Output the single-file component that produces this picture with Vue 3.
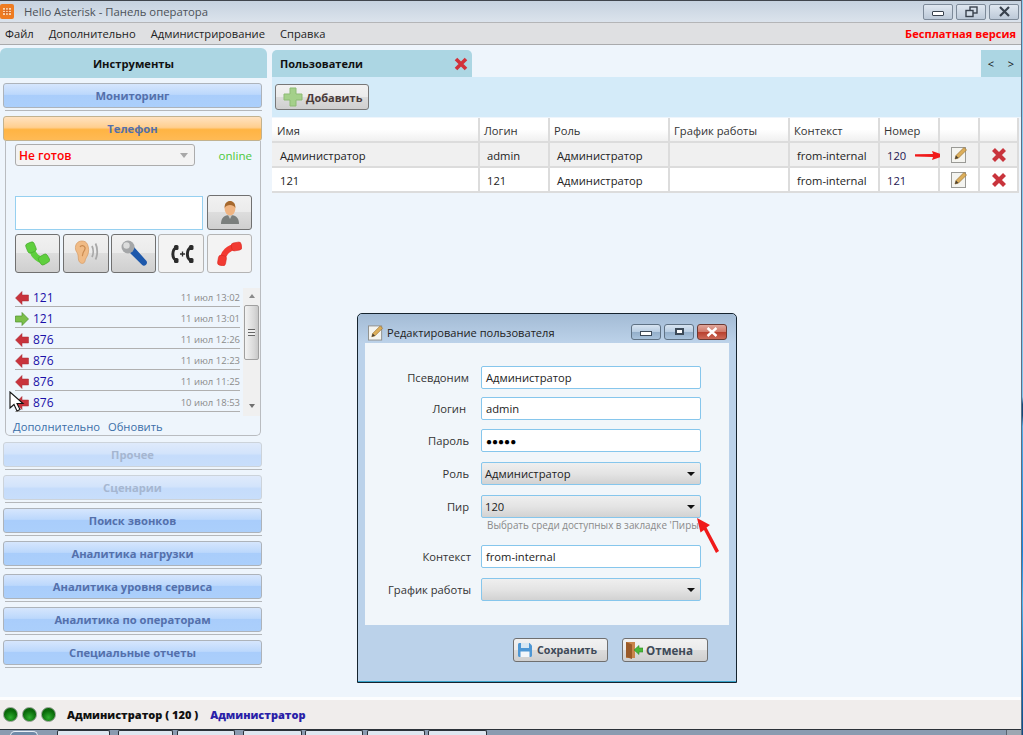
<script setup>
const menu = ['Файл', 'Дополнительно', 'Администрирование', 'Справка']
const callLog = [
  { num: '121', time: '11 июл 13:02', dir: 'in' },
  { num: '121', time: '11 июл 13:01', dir: 'out' },
  { num: '876', time: '11 июл 12:26', dir: 'in' },
  { num: '876', time: '11 июл 12:23', dir: 'in' },
  { num: '876', time: '11 июл 11:25', dir: 'in' },
  { num: '876', time: '10 июл 18:53', dir: 'in' },
]
const lowerTools = ['Поиск звонков', 'Аналитика нагрузки', 'Аналитика уровня сервиса', 'Аналитика по операторам', 'Специальные отчеты']
const users = [
  { name: 'Администратор', login: 'admin', role: 'Администратор', ctx: 'from-internal', num: '120' },
  { name: '121', login: '121', role: 'Администратор', ctx: 'from-internal', num: '121' },
]
const fields = [
  { label: 'Псевдоним', value: 'Администратор', kind: 'input' },
  { label: 'Логин', value: 'admin', kind: 'input' },
  { label: 'Пароль', value: '●●●●●', kind: 'pass' },
  { label: 'Роль', value: 'Администратор', kind: 'select' },
  { label: 'Пир', value: '120', kind: 'select', hint: "Выбрать среди доступных в закладке 'Пиры'" },
  { label: 'Контекст', value: 'from-internal', kind: 'input' },
  { label: 'График работы', value: '', kind: 'select' },
]
const tasks = [
  { w: 53, gap: 8 },
  { w: 55, gap: 4 },
  { w: 58, gap: 8 },
  { w: 59, gap: 3 },
  { w: 58, gap: 4 },
  { w: 58, gap: 3 },
  { w: 59, gap: 0 },
]
</script>

<template>
  <div class="screen">
    <div class="app">
      <header class="titlebar">
        <svg class="app-icon" width="14" height="15" viewBox="0 0 14 15">
          <rect width="14" height="15" rx="2" fill="#ee7c22" />
          <path d="M3 4h8v7H3z" fill="#fbd7b0" />
          <path d="M3 6.300h8M3 8.600h8M5.600 4v7M8.300 4v7" stroke="#d8641a" />
        </svg>
        <span class="title-text">Hello Asterisk - Панель оператора</span>
        <div class="win-btns">
          <span class="win-btn"><i class="ico-min"></i></span>
          <span class="win-btn">
            <svg width="13" height="12" viewBox="0 0 13 12" fill="none" stroke="#39424e" stroke-width="1.400"><rect x="5" y="1" width="7" height="6" /><rect x="1" y="4.500" width="7" height="6" fill="#d3dde8" /></svg>
          </span>
          <span class="win-btn">
            <svg width="13" height="11" viewBox="0 0 13 11" fill="none" stroke="#39424e" stroke-width="2.200"><path d="M2 1l9 9M11 1l-9 9" /></svg>
          </span>
        </div>
      </header>

      <nav class="menubar">
        <span v-for="m in menu" :key="m">{{ m }}</span>
        <b class="free">Бесплатная версия</b>
      </nav>

      <div class="workspace">
        <aside class="sidebar">
          <div class="side-head">Инструменты</div>
          <div class="tools">
            <button class="tool">Мониторинг</button>
            <hr class="tool-sep" />
            <button class="tool active">Телефон</button>

            <section class="phone">
              <div class="status-row">
                <div class="status-select">Не готов<i class="tri-gray"></i></div>
                <span class="online">online</span>
              </div>
              <div class="dial-row">
                <div class="dial-input"></div>
                <button class="ph-btn contact">
                  <svg width="20" height="25" viewBox="0 0 20 25">
                    <path d="M1 24c0-6 3-9 9-9s9 3 9 9z" fill="#7b7f7d" />
                    <path d="M8 15l2 4 2-4z" fill="#c9cbc9" />
                    <ellipse cx="10" cy="8.500" rx="5.400" ry="7" fill="#efb482" />
                    <path d="M4.600 8c0-5 2.400-7 5.400-7s5.400 2 5.400 7c-1.500-2.300-3-3-5.400-3S6 5.700 4.600 8z" fill="#a5682d" />
                  </svg>
                </button>
              </div>
              <div class="call-row">
                <button class="ph-btn">
                  <svg width="25" height="25" viewBox="0 0 25 25">
                    <path d="M7 5C6 12 12 19 20 20" fill="none" stroke="#5fcf3e" stroke-width="6" />
                    <rect x="1.500" y="1.500" width="9" height="10" rx="2.500" transform="rotate(-22 6 6.500)" fill="#5fcf3e" stroke="#46a52d" stroke-width=".6" />
                    <rect x="14" y="14" width="10" height="9" rx="2.500" transform="rotate(-30 19 18.500)" fill="#5fcf3e" stroke="#46a52d" stroke-width=".6" />
                  </svg>
                </button>
                <button class="ph-btn">
                  <svg width="26" height="27" viewBox="0 0 26 27">
                    <path d="M9 1C4 1 2 5 2.500 9c.3 2.500 2 3.500 2.500 6 .5 3 0 5 1.500 7s5 2 5.500-1c.4-2.500 2-4 3-7 .8-2.500 1-6-.5-9.500C13.500 2 11.500 1 9 1z" fill="#f0bb86" stroke="#d59a62" stroke-width=".7" />
                    <path d="M7 7c1-2 4-2 5 .5.5 1.500-.5 3-1.500 4.500-1 1.500-.5 3.500-1.500 4" fill="none" stroke="#c98a50" stroke-width="1.200" />
                    <path d="M19 6c1.500 3 1.500 8 0 11M22.500 3.500c2.300 4.500 2.300 11.500 0 16" fill="none" stroke="#a8a8a8" stroke-width="1.800" />
                  </svg>
                </button>
                <button class="ph-btn">
                  <svg width="28" height="27" viewBox="0 0 28 27">
                    <path d="M9 12l5-5 12.500 14c.8 1.200.6 2.800-.5 3.800s-2.800 1.200-3.800.2z" fill="#1d58ab" />
                    <circle cx="8" cy="7" r="6.500" fill="#a4a6a8" />
                    <circle cx="6.500" cy="5.500" r="3.200" fill="#dcdddd" />
                  </svg>
                </button>
                <button class="ph-btn flat">
                  <svg width="26" height="18" viewBox="0 0 26 18">
                    <path d="M9 2.500C3.500 3 3.500 15 9 15.500" fill="none" stroke="#2b2b2b" stroke-width="3" />
                    <rect x="6" y="0" width="4.500" height="5" rx="1.500" fill="#2b2b2b" />
                    <rect x="6" y="13" width="4.500" height="5" rx="1.500" fill="#2b2b2b" />
                    <path d="M12 9h5M14.500 6.500v5" stroke="#2b2b2b" stroke-width="1.300" />
                    <path d="M23.500 2.500C18 3 18 15 23.500 15.500" fill="none" stroke="#2b2b2b" stroke-width="3" />
                    <rect x="21" y="0" width="4.500" height="5" rx="1.500" fill="#2b2b2b" />
                    <rect x="21" y="13" width="4.500" height="5" rx="1.500" fill="#2b2b2b" />
                  </svg>
                </button>
                <button class="ph-btn flat">
                  <svg width="25" height="25" viewBox="0 0 25 25">
                    <path d="M19 6C12 6 6 12 5.500 19" fill="none" stroke="#f23a32" stroke-width="6" />
                    <rect x="14.500" y="1.500" width="10" height="8" rx="2.500" transform="rotate(-10 19.500 5.500)" fill="#f23a32" stroke="#d9271f" stroke-width=".6" />
                    <rect x="1" y="14.500" width="8" height="10" rx="2.500" transform="rotate(10 5 19.500)" fill="#f23a32" stroke="#d9271f" stroke-width=".6" />
                  </svg>
                </button>
              </div>

              <div class="log-wrap">
                <ul class="log">
                  <li v-for="(c, i) in callLog" :key="i">
                    <svg width="14" height="14" viewBox="0 0 14 14">
                      <path v-if="c.dir === 'in'" d="M7 .5L.5 7 7 13.500V10h6.500V4H7z" fill="#c8333c" stroke="#a62a30" stroke-width=".5" />
                      <path v-else d="M7 .5L13.500 7 7 13.500V10H.5V4H7z" fill="#7cc04a" stroke="#4f8f2c" stroke-width=".7" />
                    </svg>
                    <span class="log-num">{{ c.num }}</span>
                    <span class="log-time">{{ c.time }}</span>
                  </li>
                </ul>
                <div class="scroll">
                  <i class="tri-up"></i>
                  <div class="thumb"><span></span></div>
                  <i class="tri-down"></i>
                </div>
              </div>
              <div class="links"><a>Дополнительно</a><a>Обновить</a></div>
            </section>

            <button class="tool disabled">Прочее</button>
            <hr class="tool-sep" />
            <button class="tool disabled">Сценарии</button>
            <template v-for="t in lowerTools" :key="t">
              <hr class="tool-sep faint" />
              <button class="tool">{{ t }}</button>
            </template>
            <hr class="tool-sep" />
          </div>
        </aside>

        <main class="main">
          <div class="tabs">
            <div class="tab">
              <b>Пользователи</b>
              <svg width="14" height="14" viewBox="0 0 14 14"><path d="M2 2l10 10M12 2L2 12" stroke="#d2313a" stroke-width="3.600" /></svg>
            </div>
            <div class="tab-nav"><span>&lt;</span><span>&gt;</span></div>
          </div>
          <div class="toolbar">
            <button class="add-btn">
              <svg width="22" height="22" viewBox="0 0 22 22"><path d="M8 2h6v6h6v6h-6v6H8v-6H2V8h6z" fill="#a4d08a" stroke="#8dbb74" /></svg>
              Добавить
            </button>
          </div>
          <div class="grid">
            <div class="cell th">Имя</div>
            <div class="cell th">Логин</div>
            <div class="cell th">Роль</div>
            <div class="cell th">График работы</div>
            <div class="cell th">Контекст</div>
            <div class="cell th">Номер</div>
            <div class="cell th"></div>
            <div class="cell th"></div>
            <template v-for="(u, i) in users" :key="u.name">
              <div class="cell" :class="{ sel: i === 0 }">{{ u.name }}</div>
              <div class="cell" :class="{ sel: i === 0 }">{{ u.login }}</div>
              <div class="cell" :class="{ sel: i === 0 }">{{ u.role }}</div>
              <div class="cell" :class="{ sel: i === 0 }"></div>
              <div class="cell" :class="{ sel: i === 0 }">{{ u.ctx }}</div>
              <div class="cell num" :class="{ sel: i === 0 }">
                {{ u.num }}
                <svg v-if="i === 0" class="note-arrow" width="30" height="9" viewBox="0 0 30 9"><path d="M0 3.300L18 3l-1-3 13 4.500L17 9l1-3L0 5.500z" fill="#f01a1a" /></svg>
              </div>
              <div class="cell icon" :class="{ sel: i === 0 }">
                <svg width="17" height="17" viewBox="0 0 17 17">
                  <rect x=".5" y="1.500" width="14" height="15" fill="#f4f4f0" stroke="#9a9a96" />
                  <path d="M4 13l1-3.500L13 1.500l2.500 2.500-8 8z" fill="#dcae5a" stroke="#9b7230" stroke-width=".7" />
                  <path d="M4 13l1-3.500 2.500 2.500z" fill="#4b4032" />
                </svg>
              </div>
              <div class="cell icon" :class="{ sel: i === 0 }">
                <svg width="16" height="16" viewBox="0 0 16 16"><path d="M2.500 2.500l11 11M13.500 2.500l-11 11" stroke="#c9343c" stroke-width="4.200" /></svg>
              </div>
            </template>
          </div>
        </main>
      </div>

      <footer class="statusbar">
        <span class="led"></span><span class="led"></span><span class="led"></span>
        <b class="who">Администратор ( 120 )</b>
        <b class="who-role">Администратор</b>
      </footer>
      <div class="taskbar">
        <span class="start"></span>
        <span
          v-for="(t, i) in tasks"
          :key="i"
          class="task"
          :style="{ width: t.w + 'px', marginRight: t.gap + 'px' }"
        ></span>
        <span class="show-desktop"></span>
      </div>
    </div>

    <div class="dialog">
      <div class="dlg-title">
        <svg width="16" height="17" viewBox="0 0 17 17">
          <rect x=".5" y="1.500" width="14" height="15" fill="#f4f4f0" stroke="#8f8f8b" />
          <path d="M4 13l1-3.500L13 1.500l2.500 2.500-8 8z" fill="#dcae5a" stroke="#9b7230" stroke-width=".7" />
          <path d="M4 13l1-3.500 2.500 2.500z" fill="#4b4032" />
        </svg>
        <span>Редактирование пользователя</span>
        <div class="dlg-btns">
          <span class="dlg-btn"><i class="d-min"></i></span>
          <span class="dlg-btn"><i class="d-max"></i></span>
          <span class="dlg-btn close">
            <svg width="12" height="10" viewBox="0 0 12 10" fill="none" stroke="#fff" stroke-width="2.400"><path d="M1.500 1l9 8M10.500 1l-9 8" /></svg>
          </span>
        </div>
      </div>
      <div class="dlg-body">
        <div v-for="f in fields" :key="f.label" class="field">
          <label>{{ f.label }}</label>
          <div class="control" :class="f.kind">
            <span>{{ f.value }}</span>
            <i v-if="f.kind === 'select'" class="tri-black"></i>
          </div>
          <small v-if="f.hint">{{ f.hint }}</small>
        </div>
        <svg class="peer-arrow" width="30" height="38" viewBox="0 0 30 38"><path d="M2 0l13 7-3.500 2.500L24 33l-3 2L9 12l-3.500 2.500z" fill="#f01a1a" /></svg>
      </div>
      <div class="dlg-foot">
        <button class="dlg-action save">
          <svg width="16" height="16" viewBox="0 0 16 16">
            <path d="M1 2.500C1 1.700 1.700 1 2.500 1h10L15 3.500v10c0 .8-.7 1.500-1.500 1.500h-11c-.8 0-1.500-.7-1.500-1.500z" fill="#4e97d4" />
            <path d="M4 1h8v5H4z" fill="#d7e7f3" />
            <path d="M3.500 9.500h9V15h-9z" fill="#f4f7fa" />
          </svg>
          Сохранить
        </button>
        <button class="dlg-action cancel">
          <svg width="18" height="18" viewBox="0 0 18 18">
            <path d="M1 1h9v16H1z" fill="#c9854a" />
            <path d="M1 1l6 2.500V18L1 16z" fill="#9a5a28" />
            <path d="M9 9l5-4.500V7h4v4h-4v2.500z" fill="#49b83a" stroke="#2f8f27" stroke-width=".6" />
          </svg>
          Отмена
        </button>
      </div>
    </div>

    <svg class="cursor" width="17" height="22" viewBox="0 0 17 22">
      <path d="M1 1v16l4-3.500L8 20l3-1.500-3-6h6z" fill="#fff" stroke="#111" stroke-width="1.100" />
    </svg>
  </div>
</template>

<style scoped>
.screen {
  position: relative;
  width: 1023px;
  height: 735px;
  overflow: hidden;
  /* desktop wallpaper showing past the window's right edge */
  background: linear-gradient(#8fd0f0 0, #7fc6ee 54%, #134a7a 55%, #134a7a 56.500%, #52aee8 58%, #1a88e0 75%, #4fb4ee 82%, #1174c0 92%, #10487e 100%);
  font-family: "Open Sans", "Noto Sans", sans-serif;
  font-size: 11.2px;
  color: #222;
}
button { font-family: inherit; }

.app {
  width: 1022px;
  height: 735px;
  box-sizing: border-box;
  border-right: 1px solid #5a6f86;
  display: flex;
  flex-direction: column;
  background: #eef5fc;
}

.titlebar {
  height: 22px;
  flex: none;
  box-sizing: border-box;
  border-top: 1px solid #40454c;
  display: flex;
  align-items: center;
  background: linear-gradient(#c6d2df, #dbe3ec);
}
.title-text { margin-left: 10px; font-size: 11.3px; color: #4c5258; }
.win-btns { margin-left: auto; margin-right: 2px; display: flex; gap: 3px; }
.win-btn {
  width: 30px;
  height: 16px;
  box-sizing: border-box;
  border: 1px solid #7d8a99;
  border-radius: 2px;
  background: linear-gradient(#dfe7f0, #bcc9d8);
  display: flex;
  align-items: center;
  justify-content: center;
}
.ico-min { width: 10px; height: 3px; border: 1px solid #39424e; background: #fff; border-radius: 1px; margin-top: 3px; }

.menubar {
  height: 23px;
  flex: none;
  box-sizing: border-box;
  border-top: 1px solid #b4b5b7;
  border-bottom: 1px solid #a9aaac;
  background: #dfe0e2;
  display: flex;
  align-items: center;
  padding-left: 5px;
  gap: 15px;
}
.free { margin-left: auto; margin-right: 5px; color: #f00; font-weight: 700; font-size: 11.1px; }

.workspace { flex: 1; min-height: 0; display: flex; gap: 5px; padding-top: 3px; }
.sidebar {
  width: 267px;
  height: 649px;
  flex: none;
  border-radius: 6px;
  overflow: hidden;
}
.side-head {
  height: 30px;
  background: #acd6e3;
  display: flex;
  align-items: center;
  justify-content: center;
  font-weight: 700;
  color: #111;
}
.tools { padding: 5px 5px 0 3px; display: flex; flex-direction: column; }
.tool {
  height: 25px;
  flex: none;
  border: 1px solid #adb3ba;
  border-radius: 3px;
  background: linear-gradient(#d6e6fd 0, #bcd8fc 45%, #a9cdfb 50%, #abcffb 100%);
  color: #5470ab;
  font-size: 11.2px;
  font-weight: 700;
  padding: 0;
}
.tool.active {
  background: linear-gradient(#ffe2c0 0, #ffcf8f 45%, #ffb443 55%, #ffba55 100%);
  border-color: #c2b28f;
}
.tool.disabled {
  background: linear-gradient(#dfeafb 0, #d3e4fb 45%, #c5dcfb 55%, #c8defb 100%);
  border-color: #ccd3da;
  color: #a5b6d0;
}
.tool-sep { height: 1px; margin: 2px 0 5px 2px; width: 257px; border: 0; background: #b4b7ba; flex: none; }

.phone {
  height: 295px;
  box-sizing: border-box;
  flex: none;
  margin: 0 1px 6px 2px;
  border: 1px solid #b9bcc0;
  border-top: 0;
  border-radius: 0 0 5px 5px;
  padding: 3px 7px 0 9px;
}
.status-row { display: flex; align-items: center; }
.status-select {
  width: 180px;
  height: 22px;
  box-sizing: border-box;
  border: 1px solid #acacac;
  border-radius: 3px;
  background: #f3f3f3;
  color: #f00;
  font-weight: 600;
  font-size: 12px;
  padding: 0 6px 0 3px;
  display: flex;
  align-items: center;
  justify-content: space-between;
}
.tri-gray { width: 0; height: 0; border: 4px solid transparent; border-top: 5px solid #a8a8a8; border-bottom: 0; }
.online { margin-left: auto; margin-right: 1px; color: #4cc83c; font-size: 11.6px; }
.dial-row { display: flex; gap: 4px; margin-top: 30px; }
.dial-input {
  width: 188px;
  height: 34px;
  box-sizing: border-box;
  border: 1px solid #96d0f0;
  background: #fff;
}
.ph-btn {
  width: 45px;
  padding: 0;
  border: 1px solid #707070;
  border-radius: 3px;
  background: linear-gradient(#f1f1f1 0, #ebebeb 48%, #dddddd 50%, #cfcfcf 100%);
  display: flex;
  align-items: center;
  justify-content: center;
}
.ph-btn.contact { height: 35px; margin-top: -1px; }
.ph-btn.flat { background: #f3f3f3; border-color: #b4b4b4; }
.call-row { display: flex; gap: 2px; margin-top: 4px; height: 39px; }
.call-row .ph-btn:nth-child(2), .call-row .ph-btn:nth-child(4) { width: 46px; }
.call-row .ph-btn:nth-child(2), .call-row .ph-btn:nth-child(5) { margin-left: 1px; }

.log-wrap { display: flex; margin: 13px -7px 0 0; height: 130px; }
.log { list-style: none; margin: 0; padding: 0; width: 225px; flex: none; }
.log li {
  height: 21px;
  box-sizing: border-box;
  padding-top: 3px;
  border-bottom: 1px solid #b0b0b0;
  display: flex;
  align-items: center;
  gap: 4px;
}
.log-num { color: #1a10a8; font-size: 12px; }
.log-time { margin-left: auto; color: #8b8b8b; font-size: 9.5px; }
.scroll {
  width: 17px;
  height: 128px;
  margin: 2px 0 0 3px;
  background: #f0f0f0;
  display: flex;
  flex-direction: column;
  align-items: center;
  padding-top: 6px;
  box-sizing: border-box;
  flex: none;
}
.tri-up { width: 0; height: 0; border: 3px solid transparent; border-bottom: 4px solid #8a8a8a; border-top: 0; }
.tri-down { width: 0; height: 0; border: 3px solid transparent; border-top: 4px solid #707070; border-bottom: 0; margin-top: 44px; }
.thumb {
  width: 15px;
  height: 55px;
  margin-top: 7px;
  box-sizing: border-box;
  border: 1px solid #a0a0a0;
  border-radius: 2px;
  background: linear-gradient(90deg, #f3f3f3, #d8d8d8 70%, #c8c8c8);
  display: flex;
  align-items: center;
  justify-content: center;
}
.thumb span { width: 7px; height: 7px; border-top: 1px solid #666; border-bottom: 1px solid #666; box-sizing: border-box; background: linear-gradient(#eee 40%, #666 40%, #666 60%, #eee 60%); }
.links { display: flex; gap: 8px; margin: 3px 0 0 -2px; color: #3b6fa8; }

.main { flex: 1; min-width: 0; padding-top: 2px; }
.tabs { height: 27px; display: flex; justify-content: space-between; }
.tab {
  width: 200px;
  box-sizing: border-box;
  background: #acd6e3;
  border-radius: 5px 5px 0 0;
  display: flex;
  align-items: center;
  justify-content: space-between;
  padding: 0 4px 0 8px;
  font-size: 11px;
  color: #111;
}
.tab-nav {
  width: 40px;
  background: #acd6e3;
  display: flex;
  align-items: center;
  justify-content: space-around;
  font-size: 11px;
  color: #111;
}
.toolbar { height: 40px; background: #d4ebf9; display: flex; align-items: center; padding-left: 3px; box-sizing: border-box; }
.add-btn {
  width: 94px;
  height: 26px;
  padding: 0 0 0 6px;
  border: 1px solid #777;
  border-radius: 3px;
  background: linear-gradient(#f1f1f1 0, #ebebeb 48%, #dcdcdc 50%, #cfcfcf 100%);
  display: flex;
  align-items: center;
  gap: 2px;
  color: #4a3a3a;
  font-weight: 700;
  font-size: 11px;
}
.grid {
  display: grid;
  grid-template-columns: 208px 70px 120px 120px 90px 60px 40px 39px;
  grid-auto-rows: 25px;
  margin-top: 1px;
  width: 747px;
}
.cell {
  box-sizing: border-box;
  background: #fff;
  border-right: 2px solid #dcdcdc;
  border-bottom: 2px solid #dcdcdc;
  display: flex;
  align-items: center;
  padding: 1px 0 0 7px;
  white-space: nowrap;
  position: relative;
}
.cell:nth-child(8n+1):not(.th) { padding-left: 8px; }
.th { background: linear-gradient(#fff, #fff 50%, #f0f0f0); color: #333; padding-left: 4px; }
.th:first-child { padding-left: 5px; }
.sel { background: #f0f0f0; }
.icon { justify-content: center; padding: 0; }
.num { color: #1e1550; }
.note-arrow { position: absolute; left: 35px; top: 8px; }

.statusbar {
  height: 32px;
  flex: none;
  box-sizing: border-box;
  border-top: 3px solid #fcfdfe;
  background: #f0edec;
  display: flex;
  align-items: center;
  padding-left: 3px;
  gap: 4px;
  font-weight: 700;
  font-size: 11px;
}
.led {
  width: 15px;
  height: 15px;
  box-sizing: border-box;
  border-radius: 50%;
  border: 1px solid #8d9a8d;
  background: radial-gradient(circle at 50% 72%, #2fae2f, #0a6a0a 58%, #0a620a);
}
.who { margin-left: 7px; color: #111; }
.who-role { margin-left: 8px; color: #2a1fa8; }

.taskbar {
  height: 6px;
  flex: none;
  box-sizing: border-box;
  border-top: 1px solid #2b3138;
  background: #8a9bb0;
  display: flex;
  position: relative;
  padding-left: 57px;
}
.start {
  position: absolute;
  left: 10px;
  top: 1px;
  width: 28px;
  height: 5px;
  box-sizing: border-box;
  border: 1px solid #e8eef5;
  border-bottom: 0;
  border-radius: 14px 14px 0 0;
  background: #6f8aa8;
}
.task { height: 5px; flex: none; border-radius: 2px 2px 0 0; background: #dfe7f0; border: 1px solid #2b3138; border-bottom: 0; box-sizing: border-box; }
.show-desktop { position: absolute; right: 0; top: 0; width: 14px; height: 5px; background: #9da7b2; border-left: 1px solid #5a6470; }

/* floating window on top of the app */
.dialog {
  position: absolute;
  left: 357px;
  top: 313px;
  width: 380px;
  height: 370px;
  box-sizing: border-box;
  border: 1px solid #15232e;
  border-radius: 5px 5px 0 0;
  background: #bbd2ea;
  display: flex;
  flex-direction: column;
  padding: 0 7px;
  box-shadow: inset 0 -1px 0 #37a3c9;
}
.dlg-title {
  height: 29px;
  flex: none;
  box-sizing: border-box;
  margin: 0 -7px;
  padding: 8px 9px 0 10px;
  background: linear-gradient(#a3bbd5, #bcd2e9);
  border-radius: 5px 5px 0 0;
  display: flex;
  align-items: center;
  gap: 3px;
  font-size: 11.1px;
}
.dlg-btns { margin-left: auto; display: flex; gap: 3px; margin-top: -2px; }
.dlg-btn {
  width: 30px;
  height: 16px;
  box-sizing: border-box;
  border: 1px solid #5f7284;
  border-radius: 3px;
  background: linear-gradient(#d7e4f1 0, #b8cde2 50%, #94afca 52%, #a9c3dc 100%);
  display: flex;
  align-items: center;
  justify-content: center;
}
.dlg-btn.close { background: linear-gradient(#e0a79c 0, #d07868 50%, #b8402e 52%, #cc6a58 100%); border-color: #6b3a33; }
.d-min { width: 10px; height: 3px; margin-top: 3px; background: #fff; border: 1px solid #3c4a58; }
.d-max { width: 9px; height: 7px; box-sizing: border-box; border: 2px solid #3c4a58; background: #fff; }
.dlg-body {
  position: relative;
  height: 282px;
  flex: none;
  box-sizing: border-box;
  background: #f1f6fa;
  padding-top: 23px;
  display: flex;
  flex-direction: column;
  gap: 8px;
}
.field {
  display: grid;
  grid-template-columns: 106px 220px;
  column-gap: 10px;
  align-items: center;
}
.field:nth-child(3), .field:nth-child(6) { margin-top: 1px; }
.field:nth-child(4), .field:nth-child(5), .field:nth-child(7) { margin-top: 2px; }
.field label { text-align: right; color: #333; padding-right: 2px; }
.field:nth-child(2) label { padding-right: 5px; }
.field:nth-child(6) label, .field:nth-child(7) label { padding-right: 0; }
.control {
  height: 23px;
  box-sizing: border-box;
  border: 1px solid #86c6ec;
  border-radius: 2px;
  background: #fff;
  display: flex;
  align-items: center;
  padding: 0 4px;
  justify-content: space-between;
}
.control.select { background: linear-gradient(#efefef, #e4e4e4 50%, #d2d2d2); padding: 0 5px 0 3px; }
.control.pass { font-size: 10px; color: #000; }
.tri-black { width: 0; height: 0; border: 4px solid transparent; border-top: 4px solid #111; border-bottom: 0; }
.field small {
  grid-column: 2;
  height: 18px;
  line-height: 14px;
  font-size: 9.9px;
  color: #8a8a8a;
  padding-left: 6px;
  box-sizing: border-box;
  white-space: nowrap;
  width: 220px;
}
.peer-arrow { position: absolute; left: 330px; top: 175px; }
.dlg-foot {
  flex: 1;
  display: flex;
  justify-content: flex-end;
  gap: 14px;
  padding: 13px 21px 0 0;
  align-items: flex-start;
}
.dlg-action {
  height: 24px;
  border: 1px solid #6f6f6f;
  border-radius: 3px;
  background: linear-gradient(#f1f1f1 0, #ebebeb 48%, #dcdcdc 50%, #cfcfcf 100%);
  display: flex;
  align-items: center;
  font-weight: 700;
  color: #3f4a58;
}
.dlg-action.save { width: 95px; padding: 0 0 0 3px; gap: 4px; font-size: 10.7px; }
.dlg-action.cancel { width: 86px; padding: 0 0 0 2px; gap: 3px; font-size: 11.6px; }
.cursor { position: absolute; left: 9px; top: 391px; }
</style>
